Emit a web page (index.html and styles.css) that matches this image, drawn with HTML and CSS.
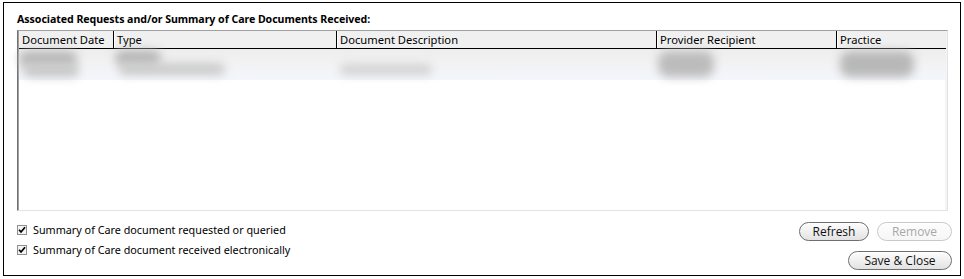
FILE: index.html
```html
<!DOCTYPE html>
<html>
<head>
<meta charset="utf-8">
<link rel="stylesheet" href="styles.css">
</head>
<body>
<div class="frame">
  <div class="title">Associated Requests and/or Summary of Care Documents Received:</div>
  <div class="grid">
    <div class="head">
      <div class="hc c1">Document Date</div>
      <div class="hc c2">Type</div>
      <div class="hc c3">Document Description</div>
      <div class="hc c4">Provider Recipient</div>
      <div class="hc c5">Practice</div>
    </div>
    <div class="row">
      <div class="cell c1"><span class="blob b1a"></span><span class="blob b1b"></span></div>
      <div class="cell c2"><span class="blob b2a"></span><span class="blob b2b"></span></div>
      <div class="cell c3"><span class="blob b3a"></span></div>
      <div class="cell c4"><span class="blob b4a"></span></div>
      <div class="cell c5"><span class="blob b5a"></span></div>
    </div>
    <div class="empty"></div>
  </div>
  <div class="bottom">
    <div class="checks">
      <label class="chk"><span class="box"><svg viewBox="0 0 8 8" width="8" height="8"><path d="M1 3.8 L3 6 L7 1.2" fill="none" stroke="#000" stroke-width="1.7"/></svg></span>Summary of Care document requested or queried</label>
      <label class="chk"><span class="box"><svg viewBox="0 0 8 8" width="8" height="8"><path d="M1 3.8 L3 6 L7 1.2" fill="none" stroke="#000" stroke-width="1.7"/></svg></span>Summary of Care document received electronically</label>
    </div>
    <div class="actions">
      <div class="btnrow">
        <button class="btn w-refresh">Refresh</button>
        <button class="btn w-remove disabled">Remove</button>
      </div>
      <div class="btnrow">
        <button class="btn w-save">Save &amp; Close</button>
      </div>
    </div>
  </div>
</div>
</body>
</html>
```
FILE: styles.css
```css
html, body {
  margin: 0;
  padding: 0;
  background: #fff;
}
body {
  font-family: "Noto Sans", "Open Sans", sans-serif;
  color: #000;
}
.frame {
  margin: 2px 0 0 3px;
  width: 956px;
  height: 272px;
  border: 1px solid #000;
  padding: 0;
  box-sizing: content-box;
}
.title {
  font-weight: bold;
  font-size: 10.6px;
  line-height: 14px;
  margin: 9px 0 0 13px;
  letter-spacing: -0.05px;
}
.grid {
  margin: 4px 0 0 13px;
  width: 929px;
  height: 179px;
  border-top: 1px solid #a0a0a0;
  border-left: 1px solid #707070;
  border-right: 1px solid #e3e3e3;
  border-bottom: 1px solid #e3e3e3;
  box-shadow: inset 1px 0 0 #a0a0a0, inset -2px 0 0 #f4f4f4;
  background: #fff;
  display: flex;
  flex-direction: column;
}
.head {
  display: flex;
  height: 17px;
  margin-left: 1px;
  background: #f0f0f0;
  border-bottom: 1px solid #000;
  width: 927px;
}
.hc {
  font-size: 11.2px;
  line-height: 17px;
  padding-left: 3px;
  box-sizing: border-box;
  white-space: nowrap;
  overflow: hidden;
}
.hc + .hc {
  border-left: 1px solid #000;
  box-shadow: inset 1px 0 0 #fff;
}
.c1 { width: 94px; }
.c2 { width: 223px; }
.c3 { width: 320px; }
.c4 { width: 180px; }
.c5 { width: 110px; }
.row {
  display: flex;
  height: 31px;
  margin-left: 1px;
  width: 927px;
  background: linear-gradient(#ededed, #f2f2f3 45%, #f3f6fc);
}
.cell {
  position: relative;
  box-sizing: border-box;
}
.blob {
  position: absolute;
  border-radius: 10px;
  filter: blur(5px);
}
.b1a { left: 0; top: 2px; width: 58px; height: 16px; background: #b8b8b8; }
.b1b { left: 4px; top: 14px; width: 56px; height: 14px; background: #c8c8c8; }
.b2a { left: 2px; top: 1px; width: 46px; height: 16px; background: #b8b8b8; }
.b2b { left: 6px; top: 14px; width: 106px; height: 12px; background: #cacaca; }
.b3a { left: 4px; top: 15px; width: 92px; height: 11px; background: #d2d2d2; }
.b4a { left: 2px; top: 2px; width: 56px; height: 26px; background: #bcbcbc; }
.b5a { left: 4px; top: 2px; width: 74px; height: 26px; background: #b8b8b8; }
.empty { flex: 1; }
.bottom {
  display: flex;
  justify-content: space-between;
  margin: 11px 0 0 13px;
}
.checks {
  display: flex;
  flex-direction: column;
  gap: 7px;
  padding-top: 1px;
}
.chk {
  display: flex;
  align-items: center;
  font-size: 10.8px;
  line-height: 13px;
  gap: 6px;
}
.box {
  width: 8px;
  height: 8px;
  border: 1px solid #8e8f8f;
  background: #f4f4f4;
  display: flex;
  align-items: center;
  justify-content: center;
}
.box svg { display: block; }
.actions {
  display: flex;
  flex-direction: column;
  align-items: flex-end;
  gap: 10px;
  margin-right: 8px;
}
.btnrow {
  display: flex;
  gap: 8px;
}
.btn {
  height: 19px;
  border: 1px solid #6e6e6e;
  border-radius: 10px;
  background: linear-gradient(#fdfdfd, #f0f0f0 50%, #e2e2e2);
  font-family: "Open Sans", "Noto Sans", sans-serif;
  font-size: 12px;
  line-height: 15px;
  color: #111;
  padding: 0;
  text-align: center;
  box-shadow: inset 0 1px 0 #fff;
}
.w-refresh { width: 70px; }
.w-remove { width: 75px; }
.w-save { width: 104px; }
.btn.disabled {
  color: #a8a8a8;
  border-color: #c8c8c8;
  background: linear-gradient(#fdfdfd, #f6f6f6);
}
```
